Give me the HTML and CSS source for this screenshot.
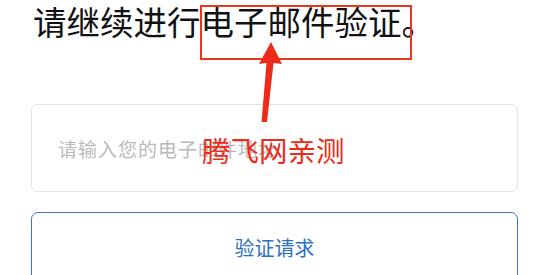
FILE: index.html
```html
<!DOCTYPE html>
<html lang="zh-CN">
<head>
<meta charset="utf-8">
<link rel="stylesheet" href="styles.css">
</head>
<body>
<div class="page">
  <h1 class="title">请继续进行电子邮件验证。</h1>
  <div class="form">
    <div class="field"><span class="placeholder">请输入您的电子邮件地址</span></div>
    <div class="btn">验证请求</div>
  </div>
  <div class="mark-box"></div>
  <svg class="arrow" width="550" height="275" viewBox="0 0 550 275">
    <polygon points="271,42 282,64 273.5,63 267,122 261.5,122 266.5,63 259,64" fill="#ee2a1a"/>
  </svg>
  <div class="watermark">腾飞网亲测</div>
</div>
</body>
</html>
```
FILE: styles.css
```css
html, body {
  margin: 0;
  padding: 0;
  background: #ffffff;
}
.page {
  position: relative;
  width: 550px;
  height: 275px;
  overflow: hidden;
  font-family: "Noto Sans CJK SC", "Noto Sans", sans-serif;
}
.title {
  margin: 0;
  padding-left: 33px;
  font-size: 33.5px;
  line-height: 42px;
  font-weight: 400;
  color: #111111;
  white-space: nowrap;
}
.form {
  display: flex;
  flex-direction: column;
  gap: 20px;
  margin-top: 62px;
  padding: 0 32px 0 31px;
}
.field {
  height: 86px;
  border: 1px solid #e3e3e3;
  border-radius: 6px;
  display: flex;
  align-items: center;
  padding-left: 26px;
}
.placeholder {
  font-size: 19px;
  letter-spacing: 1px;
  color: #b9b9b9;
  margin-top: 1px;
}
.btn {
  height: 80px;
  border: 1.5px solid #3a78c6;
  border-radius: 7px;
  box-sizing: border-box;
  display: flex;
  justify-content: center;
  padding-top: 23px;
  font-size: 20px;
  line-height: 24px;
  color: #2e6fc2;
}
.mark-box {
  position: absolute;
  left: 200px;
  top: 5px;
  width: 208px;
  height: 51px;
  border: 2.5px solid #e8361f;
}
.arrow {
  position: absolute;
  left: 0;
  top: 0;
}
.watermark {
  position: absolute;
  left: 202px;
  top: 133px;
  font-size: 28.5px;
  line-height: 34px;
  color: #ec2b1a;
  white-space: nowrap;
}
```
